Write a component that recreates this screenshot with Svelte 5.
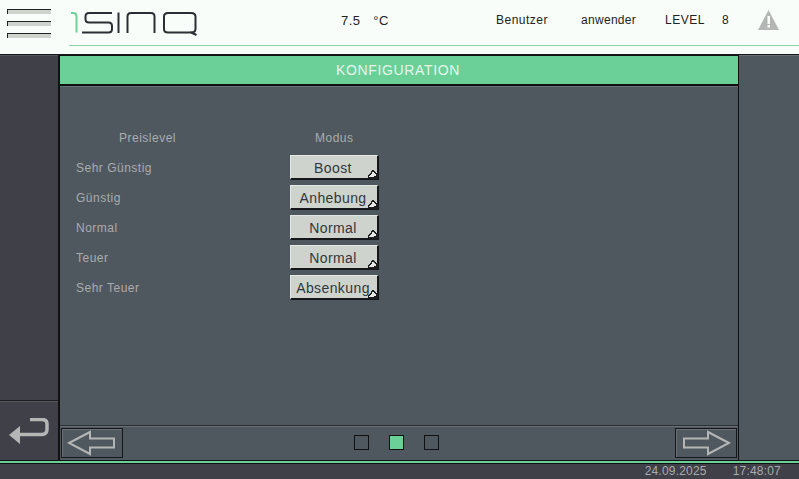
<script>
  const rows = [
    { level: "Sehr Günstig", mode: "Boost" },
    { level: "Günstig", mode: "Anhebung" },
    { level: "Normal", mode: "Normal" },
    { level: "Teuer", mode: "Normal" },
    { level: "Sehr Teuer", mode: "Absenkung" }
  ];
  const dots = [false, true, false];
</script>

<div class="screen">
  <header class="top">
    <div class="menu">
      <span></span><span></span><span></span>
    </div>
    <div class="brand">
      <svg class="logo" width="130" height="32" viewBox="0 0 130 32" fill="none">
        <path d="M1 4H3.500Q6.500 4 6.500 7.500V23.500" stroke="#6fd39b" stroke-width="2" />
        <path d="M42 4H19Q15.500 4 15.500 7.500V10Q15.500 13.500 19 13.500H38.500Q42 13.500 42 17V20Q42 23.500 38.500 23.500H12" stroke="#2b2f33" stroke-width="2" />
        <path d="M48.500 3.500V24" stroke="#2b2f33" stroke-width="2" />
        <path d="M57.500 24V7.500Q57.500 4 61 4H81Q84.500 4 84.500 7.500V24" stroke="#2b2f33" stroke-width="2" />
        <path d="M98 4H121Q125.500 4 125.500 7.500V20Q125.500 23.500 121 23.500H98Q94 23.500 94 20V7.500Q94 4 98 4ZM120 23L126.500 26" stroke="#2b2f33" stroke-width="2" />
      </svg>
      <div class="temp"><span>7.5</span><span>°C</span></div>
      <div class="user">
        <span class="u1">Benutzer</span>
        <span class="u2">anwender</span>
        <span class="u3">LEVEL</span>
        <span class="u4">8</span>
        <svg class="warn" width="21" height="21" viewBox="0 0 21 21">
          <path d="M10.500 0L21 20H0Z" fill="#b4b6b6" />
          <rect x="9.500" y="6" width="2.500" height="8" fill="#f8fdf9" />
          <rect x="9.500" y="15" width="2.500" height="2.500" fill="#f8fdf9" />
        </svg>
      </div>
    </div>
  </header>

  <div class="middle">
    <aside class="side left">
      <div class="fill"></div>
      <button class="back" aria-label="Zurück">
        <svg width="42" height="28" viewBox="0 0 42 28" fill="none">
          <path d="M21 1.500H33Q38 1.500 38 6V11Q38 16.500 33 16.500H11" stroke="#b4b6b6" stroke-width="3.500" />
          <path d="M0 17L11 8V26Z" fill="#b4b6b6" />
        </svg>
      </button>
    </aside>

    <main class="center">
      <div class="title">KONFIGURATION</div>
      <section class="content">
        <div class="heads">
          <span class="h1">Preislevel</span>
          <span class="h2">Modus</span>
        </div>
        <div class="rows">
          {#each rows as row}
            <div class="row">
              <span class="label">{row.level}</span>
              <button class="mode">
                {row.mode}
                <svg class="corner" width="11" height="11" viewBox="0 0 11 11" shape-rendering="crispEdges">
                  <path d="M1.500 9.500V7.500H2.500V6.500H3.500V5.500H4.500V3.500H5.500V2.500H6.500V3.500H7.500V4.500H8.500V5.500H9.500V9.500Z" fill="#e6e9e5" stroke="#1c1e20" />
                  <path d="M4 11H11V5H9V8H7V9H4Z" fill="#1c1e20" />
                </svg>
              </button>
            </div>
          {/each}
        </div>
      </section>
      <nav class="pager">
        <button class="nav" aria-label="Zurück">
          <svg width="50" height="26" viewBox="0 0 50 26" fill="none">
            <path d="M2 13L23 2V8.500H47V17.500H23V24Z" stroke="#b4b6b6" stroke-width="2" />
          </svg>
        </button>
        <div class="dots">
          {#each dots as on}
            <span class="dot" class:on></span>
          {/each}
        </div>
        <button class="nav" aria-label="Weiter">
          <svg width="50" height="26" viewBox="0 0 50 26" fill="none">
            <path d="M48 13L27 2V8.500H3V17.500H27V24Z" stroke="#b4b6b6" stroke-width="2" />
          </svg>
        </button>
      </nav>
    </main>

    <aside class="side right"></aside>
  </div>

  <footer class="status">
    <span>24.09.2025</span>
    <span>17:48:07</span>
  </footer>
</div>

<style>
  :global(body) {
    margin: 0;
    background: #f8fdf9;
  }
  .screen {
    width: 799px;
    height: 479px;
    display: flex;
    flex-direction: column;
    overflow: hidden;
    font-family: "Liberation Sans", Arial, sans-serif;
    font-size: 12px;
    letter-spacing: 0.5px;
  }
  button {
    font-family: inherit;
    letter-spacing: inherit;
    padding: 0;
    margin: 0;
    cursor: pointer;
  }

  /* header */
  .top {
    height: 54px;
    flex: none;
    display: flex;
    background: #f8fdf9;
    border-bottom: 1px solid #16181a;
    box-sizing: content-box;
  }
  .menu {
    width: 69px;
    flex: none;
    box-sizing: border-box;
    padding: 9px 0 0 7px;
    display: flex;
    flex-direction: column;
    gap: 7px;
  }
  .menu span {
    display: block;
    height: 4px;
    background: #cfd3ce;
    border-top: 1px solid #222;
    border-left: 1px solid #222;
    box-sizing: content-box;
    width: 43px;
  }
  .brand {
    flex: 1;
    height: 45px;
    position: relative;
    display: flex;
    align-items: flex-start;
    border-bottom: 1px solid #8fcfa9;
    box-sizing: content-box;
  }
  .logo {
    margin: 9px 0 0 1px;
    flex: none;
  }
  .temp {
    margin: 13px 0 0 141px;
    font-size: 13px;
    letter-spacing: 0.4px;
    color: #222;
    display: flex;
    gap: 13px;
    line-height: 15px;
  }
  .user {
    margin-left: auto;
    display: flex;
    align-items: center;
    height: 20px;
    margin-top: 10px;
    color: #222;
    line-height: 15px;
  }
  .u1 { width: 85px; }
  .u2 { width: 84px; letter-spacing: 0.3px; }
  .u3 { width: 58px; }
  .u4 { width: 35px; margin-left: -1px; margin-right: 1px; }
  .warn {
    margin-right: 20px;
  }

  /* middle */
  .middle {
    flex: 1;
    display: flex;
    min-height: 0;
  }
  .side {
    width: 58px;
    flex: none;
    display: flex;
    flex-direction: column;
    box-sizing: border-box;
  }
  .left {
    background: #3f4048;
    border-top: 1px solid #55565c;
  }
  .fill {
    flex: 1;
  }
  .back {
    height: 60px;
    background: #3f4048;
    border: 0;
    border-top: 1px solid #1c1d20;
    box-shadow: inset 0 1px 0 #55565c;
    display: flex;
    align-items: flex-start;
    justify-content: flex-start;
    padding: 17px 0 0 9px;
  }
  .right {
    width: 60px;
    background: #50585f;
    border-top: 1px solid #666d73;
  }
  .center {
    flex: 1;
    display: flex;
    flex-direction: column;
    border-left: 2px solid #111;
    border-right: 1px solid #111;
    min-width: 0;
    background: #50585f;
  }
  .title {
    height: 28px;
    flex: none;
    border-top: 1px solid #111;
    background: #6bd098;
    color: #e6f5eb;
    font-size: 14px;
    letter-spacing: 0.65px;
    text-align: center;
    line-height: 28px;
    box-sizing: content-box;
    border-bottom: 2px solid #111;
    padding-right: 2px;
  }
  .content {
    flex: 1;
    border-top: 1px solid #6a7076;
    padding-top: 43px;
    color: #a9acae;
  }
  .heads {
    display: flex;
    height: 16px;
    line-height: 16px;
    margin-bottom: 9px;
  }
  .h1 { margin-left: 59px; width: 196px; }
  .rows {
    display: flex;
    flex-direction: column;
    gap: 5px;
  }
  .row {
    display: flex;
    align-items: center;
    height: 25px;
    padding-left: 16px;
  }
  .label {
    width: 214px;
  }
  .mode {
    position: relative;
    width: 89px;
    height: 25px;
    box-sizing: border-box;
    background: #cfd3ce;
    border: 1px solid #e3e6e2;
    border-right: 2px solid #15171a;
    border-bottom: 2px solid #15171a;
    color: #33363a;
    font-size: 14px;
    letter-spacing: 0.4px;
    line-height: 21px;
    text-align: center;
    padding: 2px 2px 0 0;
  }
  .corner {
    position: absolute;
    right: -1px;
    bottom: -1px;
  }
  .pager {
    height: 35px;
    flex: none;
    box-sizing: border-box;
    border-top: 1px solid #2b2e32;
    box-shadow: inset 0 1px 0 #686e74;
    display: flex;
    align-items: center;
    justify-content: space-between;
    padding: 2px 1px 2px 1px;
  }
  .nav {
    width: 62px;
    height: 30px;
    box-sizing: border-box;
    background: #50585f;
    border: 1px solid #15171a;
    display: flex;
    align-items: center;
    justify-content: center;
    box-shadow: inset 1px 1px 0 #6a7076;
  }
  .dots {
    display: flex;
    gap: 20px;
    margin: 0 0 2px -5px;
  }
  .dot {
    display: block;
    width: 15px;
    height: 15px;
    box-sizing: border-box;
    background: #50585f;
    border: 1px solid #111;
  }
  .dot.on {
    background: #6bd098;
  }

  /* status bar */
  .status {
    height: 19px;
    flex: none;
    box-sizing: border-box;
    background: #3f4048;
    border-top: 1px solid #111;
    box-shadow: inset 0 2px 0 #6bd098, inset 0 3px 0 #111;
    color: #a9acae;
    letter-spacing: 0.2px;
    display: flex;
    justify-content: flex-end;
    gap: 26px;
    padding: 3px 18px 0 0;
    line-height: 15px;
  }
</style>
